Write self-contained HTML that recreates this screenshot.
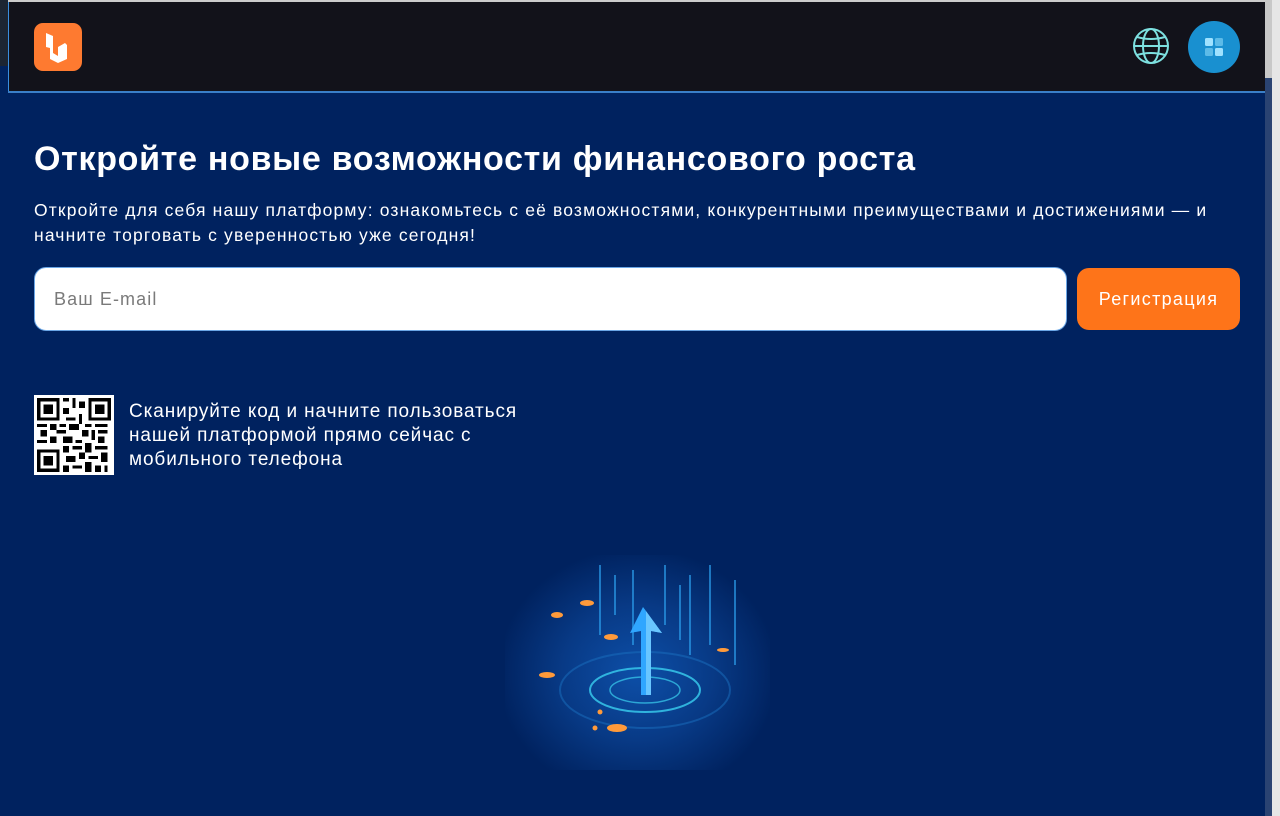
<!DOCTYPE html>
<html><head><meta charset="utf-8"><style>
*{margin:0;padding:0;box-sizing:border-box}
body{width:1280px;height:816px;overflow:hidden;background:#00225f;font-family:"Liberation Sans",sans-serif;position:relative}
.lstrip{position:absolute;left:0;top:0;width:8px;height:816px;background:#1c2533}
.lstrip:after{content:"";position:absolute;left:0;top:66px;width:8px;height:750px;background:#00225f}
.rbar{position:absolute;left:1265px;top:0;width:15px;height:816px;background:#e6e6e6}
.rbar .t{position:absolute;left:0;top:0;width:7px;height:816px;background:#2a4372}
.rbar .t2{position:absolute;left:0;top:0;width:7px;height:78px;background:#c8c8c8}
.top{position:absolute;left:8px;top:0;width:1257px;height:2px;background:#ccc}
header{position:absolute;left:8px;top:2px;width:1257px;height:89px;background:#12121a;border-left:1px solid #3a8ee0}
.hline{position:absolute;left:8px;top:91px;width:1257px;height:2px;background:#3a7fc8}
.logo{position:absolute;left:34px;top:23px;width:48px;height:48px;border-radius:9px;background:#fe7a30}
.globe{position:absolute;left:1132px;top:27px}
.apps{position:absolute;left:1188px;top:21px;width:52px;height:52px;border-radius:50%;background:#1990d0}
h1{position:absolute;left:34px;top:140px;color:#fff;font-size:34px;font-weight:bold;letter-spacing:0.7px}
p.d{position:absolute;left:34px;top:198px;width:1220px;color:#fff;font-size:17.5px;line-height:25px;letter-spacing:1.15px;white-space:nowrap}
.inp{position:absolute;left:34px;top:267px;width:1033px;height:64px;background:#fff;border-radius:12px;border:1px solid #6aa6e6;color:#7a7a7a;font-size:18px;padding:21px 19px;letter-spacing:1.1px}
.btn{position:absolute;left:1077px;top:268px;width:163px;height:62px;background:#fe7419;border-radius:12px;color:#fff;font-size:18px;text-align:center;line-height:62px;letter-spacing:1.3px}
.qr{position:absolute;left:34px;top:395px;width:80px;height:80px;background:#fff}
.qt{position:absolute;left:129px;top:400px;color:#fff;font-size:19px;line-height:24px;letter-spacing:0.9px}
.img{position:absolute;left:505px;top:555px;width:265px;height:215px;background:radial-gradient(ellipse at 50% 55%,#0d4fa8 0%,#083a86 40%,#00225f 75%)}
</style></head><body>
<div class="lstrip"></div>
<div class="top"></div>
<header></header>
<div class="hline"></div>
<div class="logo"><svg width="48" height="48" viewBox="0 0 48 48"><path d="M12 10 L19 13 L19 30 L24 33 L24 24 L31 20 L33 22 L33 36 L24 40 L16 36 L16 25 L12 24 Z" fill="#fff"/></svg></div>
<svg class="globe" width="38" height="38" viewBox="0 0 38 38" fill="none" stroke="#7de0e0" stroke-width="2"><circle cx="19" cy="19" r="17"/><ellipse cx="19" cy="19" rx="8" ry="17"/><line x1="2" y1="19" x2="36" y2="19"/><path d="M5 10 Q19 14 33 10 M5 28 Q19 24 33 28"/></svg>
<div class="apps"><svg width="52" height="52" viewBox="0 0 52 52"><rect x="17" y="17" width="8" height="8" rx="1.5" fill="#9fe2ff"/><rect x="27" y="17" width="8" height="8" rx="1.5" fill="#5cbbe8"/><rect x="17" y="27" width="8" height="8" rx="1.5" fill="#5cbbe8"/><rect x="27" y="27" width="8" height="8" rx="1.5" fill="#9fe2ff"/></svg></div>
<div class="rbar"><div class="t"></div><div class="t2"></div></div>
<h1>Откройте новые возможности финансового роста</h1>
<p class="d">Откройте для себя нашу платформу: ознакомьтесь с её возможностями, конкурентными преимуществами и достижениями — и<br>начните торговать с уверенностью уже сегодня!</p>
<div class="inp">Ваш E-mail</div>
<div class="btn">Регистрация</div>
<div class="qr"><svg width="80" height="80" viewBox="0 0 25 25" shape-rendering="crispEdges"><g fill="#000"><path d="M1 1h7v7h-7zM2 2v5h5v-5zM3 3h3v3h-3z" fill-rule="evenodd"/><path d="M17 1h7v7h-7zM18 2v5h5v-5zM19 3h3v3h-3z" fill-rule="evenodd"/><path d="M1 17h7v7h-7zM2 18v5h5v-5zM3 19h3v3h-3z" fill-rule="evenodd"/><path d="M9 1h2v1h-2zM12 1h1v3h-1zM14 2h2v2h-2zM9 4h2v2h-2zM10 7h3v1h-3zM14 6h1v3h-1zM1 9h3v1h-3zM5 9h2v2h-2zM8 9h2v1h-2zM11 9h3v2h-3zM16 9h2v1h-2zM19 9h4v1h-4zM2 11h2v2h-2zM7 11h3v1h-3zM15 11h2v2h-2zM18 11h1v3h-1zM20 11h3v1h-3zM1 14h3v1h-3zM5 13h2v2h-2zM9 13h3v2h-3zM13 14h2v1h-2zM20 13h2v2h-2zM9 16h2v2h-2zM12 16h3v1h-3zM16 15h2v3h-2zM19 16h4v1h-4zM10 19h3v2h-3zM14 18h2v2h-2zM17 19h3v1h-3zM21 18h2v3h-2zM9 22h2v2h-2zM12 22h3v1h-3zM16 21h2v3h-2zM19 22h2v2h-2zM22 22h1v2h-1z"/></g></svg></div>
<div class="qt">Сканируйте код и начните пользоваться<br>нашей платформой прямо сейчас с<br>мобильного телефона</div>
<div class="img"><svg width="265" height="215" viewBox="0 0 265 215">
<g stroke="#2a9ae8" stroke-width="2" opacity="0.7"><line x1="95" y1="10" x2="95" y2="80"/><line x1="128" y1="15" x2="128" y2="90"/><line x1="160" y1="10" x2="160" y2="70"/><line x1="185" y1="20" x2="185" y2="100"/><line x1="205" y1="10" x2="205" y2="90"/><line x1="230" y1="25" x2="230" y2="110"/><line x1="175" y1="30" x2="175" y2="85"/><line x1="110" y1="20" x2="110" y2="60"/></g>
<ellipse cx="140" cy="135" rx="55" ry="22" fill="none" stroke="#3ad0f0" stroke-width="2" opacity="0.8"/>
<ellipse cx="140" cy="135" rx="35" ry="13" fill="none" stroke="#3ad0f0" stroke-width="1.5" opacity="0.7"/>
<ellipse cx="140" cy="135" rx="85" ry="38" fill="none" stroke="#1a70c0" stroke-width="2" opacity="0.5"/>
<path d="M138 52 L157 78 L146 76 L146 140 L136 140 L136 76 L125 78 Z" fill="#2fa6ff"/>
<path d="M138 52 L157 78 L146 76 L146 140 L141 140 L141 56 Z" fill="#69c6ff"/>
<g fill="#ff9a3a"><ellipse cx="112" cy="173" rx="10" ry="4"/><ellipse cx="42" cy="120" rx="8" ry="3"/><ellipse cx="52" cy="60" rx="6" ry="3"/><ellipse cx="82" cy="48" rx="7" ry="3"/><ellipse cx="106" cy="82" rx="7" ry="3"/><circle cx="90" cy="173" r="2.5"/><circle cx="95" cy="157" r="2.5"/><ellipse cx="218" cy="95" rx="6" ry="2"/></g>
</svg></div>
</body></html>
